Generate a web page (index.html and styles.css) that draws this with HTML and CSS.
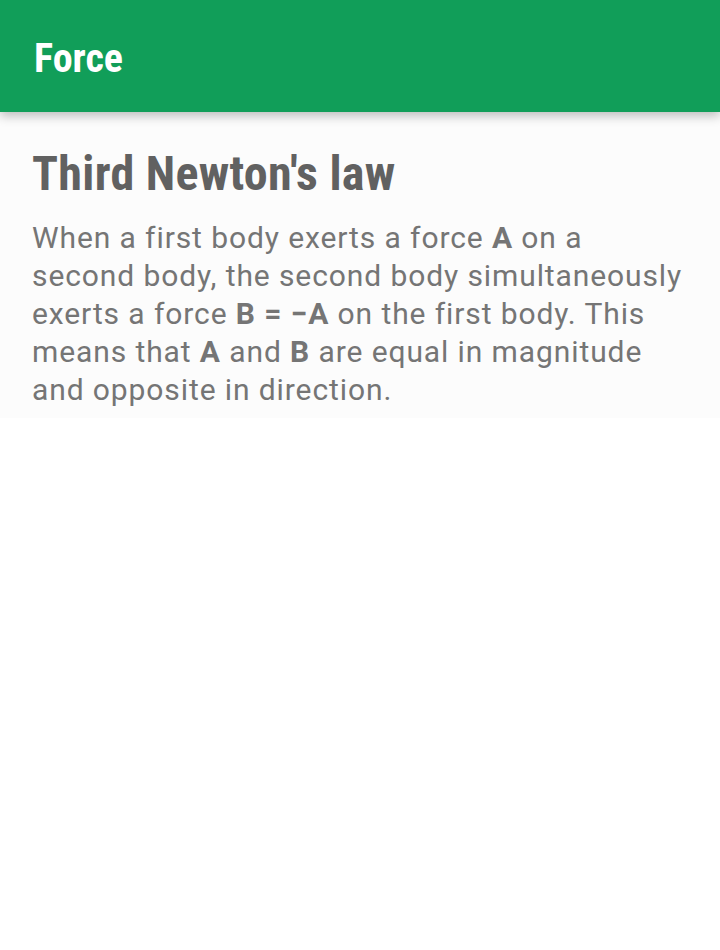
FILE: index.html
```html
<!DOCTYPE html>
<html>
<head>
<meta charset="utf-8">
<link rel="stylesheet" href="styles.css">
</head>
<body>
<header class="appbar"><h1 class="appbar-title">Force</h1></header>
<main class="card">
  <h2 class="title">Third Newton's law</h2>
  <p class="text">When a first body exerts a force <b>A</b> on a second body, the second body simultaneously exerts a force <b>B = −A</b> on the first body. This means that <b>A</b> and <b>B</b> are equal in magnitude and opposite in direction.</p>
</main>
</body>
</html>
```
FILE: styles.css
```css
html, body { margin: 0; padding: 0; background: #ffffff; }
body { font-family: Roboto, "Noto Sans", sans-serif; width: 720px; height: 950px; overflow: hidden; }
.appbar {
  position: relative;
  z-index: 2;
  height: 112px;
  background: #119e59;
  display: flex;
  align-items: center;
  padding-left: 34px;
  box-shadow: 0 4px 10px rgba(0,0,0,0.25);
}
.appbar-title {
  margin: 0;
  color: #ffffff;
  font-size: 40px;
  font-weight: 700;
  font-stretch: condensed;
  padding-top: 4px;
}
.card {
  background: #fcfcfc;
  padding: 34px 32px 9px 32px;
}
.title {
  margin: 0;
  color: #616161;
  font-size: 48px;
  font-weight: 700;
  font-stretch: condensed;
  letter-spacing: 0.3px;
  line-height: 56px;
}
.text {
  margin: 17px 0 0 0;
  color: #757575;
  font-size: 30px;
  letter-spacing: 0.9px;
  line-height: 38px;
}
.text b { font-weight: 700; }
```
